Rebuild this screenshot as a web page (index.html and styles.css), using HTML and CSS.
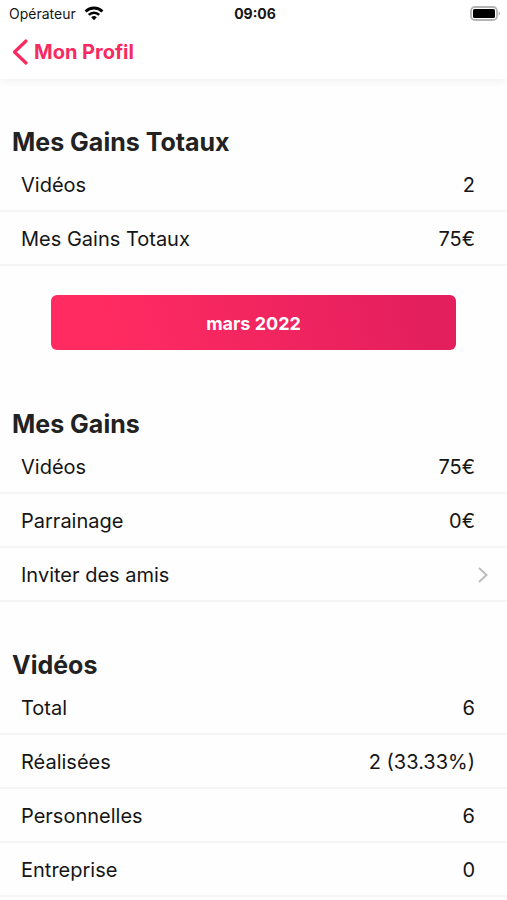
FILE: index.html
```html
<!DOCTYPE html>
<html lang="fr">
<head>
    <meta charset="UTF-8">
    <meta name="viewport" content="width=device-width, initial-scale=1.0">
    <title>Mes Gains</title>
    <link rel="stylesheet" href="styles.css">
</head>
<body>
    <header class="header">
        <div class="status-bar">
            <div class="carrier">
                <span>Opérateur</span>
                <svg class="wifi" viewBox="0 0 20 15" width="20" height="15" aria-hidden="true">
                    <path d="M1.6 5.5a11.9 11.9 0 0 1 16.8 0" fill="none" stroke="#000" stroke-width="2.9"/>
                    <path d="M4.8 8.9a7.3 7.3 0 0 1 10.4 0" fill="none" stroke="#000" stroke-width="2.6"/>
                    <path d="M10 14.2l-2.8-2.9a4 4 0 0 1 5.6 0z" fill="#000"/>
                </svg>
            </div>
            <span class="clock">09:06</span>
            <svg class="battery" viewBox="0 0 31 15" width="31" height="15" aria-hidden="true">
                <rect x="1" y="1" width="26" height="13" rx="4" fill="#fff" stroke="#b4b4b4" stroke-width="1.8"/>
                <rect x="3" y="3" width="22" height="9" rx="1.5" fill="#000"/>
                <path d="M28.6 5.3c2 .8 2 3.6 0 4.4z" fill="#b4b4b4"/>
            </svg>
        </div>
        <nav class="nav">
            <a class="back" href="#">
                <svg viewBox="0 0 16 26" width="16" height="26" aria-hidden="true">
                    <path d="M14 2L2.5 13L14 24" fill="none" stroke="#f72b62" stroke-width="3.2" stroke-linecap="round" stroke-linejoin="round"/>
                </svg>
                <span>Mon Profil</span>
            </a>
        </nav>
    </header>

    <main>
        <section class="section">
            <h2 class="title">Mes Gains Totaux</h2>
            <ul class="list">
                <li class="row"><span>Vidéos</span><span>2</span></li>
                <li class="row"><span>Mes Gains Totaux</span><span>75€</span></li>
            </ul>
            <button class="month" type="button">mars 2022</button>
        </section>

        <section class="section">
            <h2 class="title">Mes Gains</h2>
            <ul class="list">
                <li class="row"><span>Vidéos</span><span>75€</span></li>
                <li class="row"><span>Parrainage</span><span>0€</span></li>
                <li>
                    <a class="row row-link" href="#">
                        <span>Inviter des amis</span>
                        <svg viewBox="0 0 12 18" width="12" height="18" aria-hidden="true">
                            <path d="M2 2L9.5 9L2 16" fill="none" stroke="#bdbdbd" stroke-width="2"/>
                        </svg>
                    </a>
                </li>
            </ul>
        </section>

        <section class="section">
            <h2 class="title">Vidéos</h2>
            <ul class="list">
                <li class="row"><span>Total</span><span>6</span></li>
                <li class="row"><span>Réalisées</span><span>2 (33.33%)</span></li>
                <li class="row"><span>Personnelles</span><span>6</span></li>
                <li class="row"><span>Entreprise</span><span>0</span></li>
            </ul>
        </section>
    </main>
</body>
</html>
```

FILE: styles.css
```css
* {
    box-sizing: border-box;
}
body {
    margin: 0;
    font-family: Inter, "Liberation Sans", sans-serif;
    font-size: 20px;
    line-height: 24px;
    color: #151515;
    background: #fefefe;
}
.header {
    height: 79px;
    background: white;
    box-shadow: 0 2px 8px rgba(0, 0, 0, 0.06);
}
.status-bar {
    display: grid;
    grid-template-columns: 1fr auto 1fr;
    align-items: center;
    height: 27px;
    padding: 0 6px 0 9px;
    font-size: 14px;
}
.carrier {
    display: flex;
    align-items: center;
    gap: 8px;
}
.clock {
    font-weight: 700;
}
.battery {
    justify-self: end;
}
.nav {
    display: flex;
    padding: 12px;
}
.back {
    display: flex;
    align-items: center;
    gap: 6px;
    color: #f72b62;
    font-weight: 700;
    text-decoration: none;
}
.section {
    padding-top: 47px;
}
.title {
    margin: 0;
    padding: 0 12px;
    font-size: 25px;
    line-height: 32px;
    font-weight: 700;
    color: #222;
}
.list {
    margin: 0;
    padding: 0;
    list-style: none;
}
.row {
    display: flex;
    justify-content: space-between;
    align-items: center;
    height: 54px;
    padding: 2px 32px 0 21px;
    border-bottom: 2px solid #f4f4f4;
}
.row-link {
    padding-right: 18px;
    color: inherit;
    text-decoration: none;
}
.month {
    display: block;
    width: 80%;
    height: 55px;
    margin: 29px auto 11px;
    padding: 2px 0 0;
    border: none;
    border-radius: 6px;
    background: linear-gradient(75deg, #ff2b61 15%, #e41f5e 90%);
    color: white;
    font-family: inherit;
    font-size: 18px;
    font-weight: 700;
    cursor: pointer;
}
```
